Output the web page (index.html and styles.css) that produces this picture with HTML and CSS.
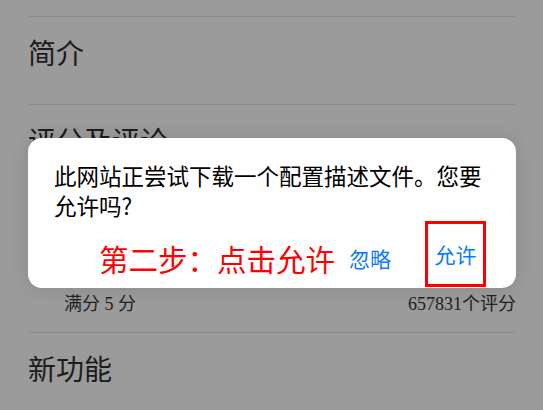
FILE: index.html
```html
<!DOCTYPE html>
<html lang="zh-CN">
<head>
  <meta charset="UTF-8" />
  <title>描述文件</title>
  <link rel="stylesheet" href="styles.css">
</head>
<body>
  <div class="sheet">
    <div class="section intro">
      <h2 class="section-title">简介</h2>
    </div>

    <div class="section ratings">
      <h2 class="section-title">评分及评论</h2>
      <div class="rating-foot">
        <span>满分 5 分</span>
        <span>657831个评分</span>
      </div>
    </div>

    <div class="section news">
      <h2 class="section-title">新功能</h2>
    </div>

    <div class="alert">
      <p class="alert-msg">此网站正尝试下载一个配置描述文件。您要允许吗?</p>
      <div class="alert-actions">
        <span class="hint">第二步：点击允许</span>
        <span class="alert-btn ignore">忽略</span>
        <span class="alert-btn allow">允许</span>
      </div>
    </div>
  </div>
</body>
</html>
```

FILE: styles.css
```css
* {
  box-sizing: border-box;
}

body {
  margin: 0;
  background: #9b9b9b;
  font-family: "Noto Sans CJK SC", "Noto Sans", sans-serif;
}

.sheet {
  position: relative;
  width: 543px;
  height: 410px;
  overflow: hidden;
  padding: 16px 27px 0 28px;
  background: #9b9b9b;
}

.section {
  border-top: 1px solid #8b8b8b;
}

.section-title {
  margin: 0;
  padding-top: 21px;
  font-size: 28px;
  line-height: 28px;
  font-weight: normal;
  color: #1c1c1c;
}

.intro {
  height: 88px;
}

.ratings {
  height: 228px;
  display: flex;
  flex-direction: column;
  justify-content: space-between;
  padding-bottom: 19px;
}

.rating-foot {
  display: flex;
  justify-content: space-between;
  padding-left: 36px;
  font-family: "Liberation Serif", "Noto Sans CJK SC", serif;
  font-size: 18px;
  line-height: 18px;
  color: #222;
}

/* 弹窗 */
.alert {
  position: absolute;
  left: 28px;
  top: 138px;
  width: 488px;
  height: 150px;
  background: #fff;
  border-radius: 14px;
  padding: 22px 30px 1px 26px;
  box-shadow: 0 0 18px rgba(0, 0, 0, 0.12);
}

.alert-msg {
  margin: 0;
  font-size: 22.5px;
  line-height: 30px;
  color: #000;
}

.alert-actions {
  margin-top: 1px;
  height: 66px;
  display: flex;
  justify-content: flex-end;
  align-items: center;
}

.hint {
  padding-top: 8px;
  font-size: 29.5px;
  line-height: 32px;
  color: #ff0000;
  margin-right: 14px;
}

.alert-btn {
  font-size: 21px;
  line-height: 24px;
  color: #0a7aff;
}

.ignore {
  padding-top: 8px;
  margin-right: 34px;
}

.allow {
  width: 61px;
  height: 66px;
  border: 3px solid #ff0000;
  display: flex;
  align-items: center;
  justify-content: center;
}
```
